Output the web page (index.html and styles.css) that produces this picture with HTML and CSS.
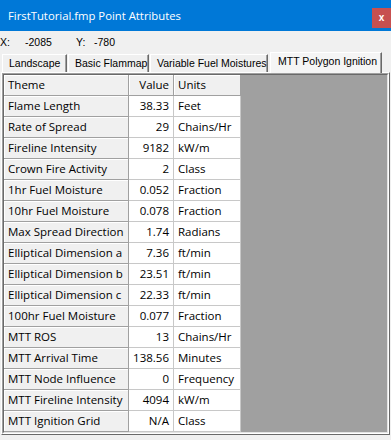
FILE: index.html
```html
<!DOCTYPE html>
<html>
<head>
<meta charset="utf-8">
<link rel="stylesheet" href="styles.css">
</head>
<body>
<div class="window">
  <div class="titlebar">
    <span class="title">FirstTutorial.fmp Point Attributes</span>
    <span class="close">x</span>
  </div>
  <div class="coords">
    <span class="c-x">X:</span><span class="c-xv">-2085</span><span class="c-y">Y:</span><span class="c-yv">-780</span>
  </div>
  <div class="tabs">
    <div class="tab t1">Landscape</div>
    <div class="tab t2">Basic Flammap</div>
    <div class="tab t3">Variable Fuel Moistures</div>
    <div class="tab t4 active">MTT Polygon Ignition</div>
  </div>
  <div class="page">
    <div class="grid">
      <div class="gridin">
        <div class="row head"><div class="th">Theme</div><div class="val fx">Value</div><div class="unit fx">Units</div></div>
        <div class="row"><div class="th">Flame Length</div><div class="val">38.33</div><div class="unit">Feet</div></div>
        <div class="row"><div class="th">Rate of Spread</div><div class="val">29</div><div class="unit">Chains/Hr</div></div>
        <div class="row"><div class="th">Fireline Intensity</div><div class="val">9182</div><div class="unit">kW/m</div></div>
        <div class="row"><div class="th">Crown Fire Activity</div><div class="val">2</div><div class="unit">Class</div></div>
        <div class="row"><div class="th">1hr Fuel Moisture</div><div class="val">0.052</div><div class="unit">Fraction</div></div>
        <div class="row"><div class="th">10hr Fuel Moisture</div><div class="val">0.078</div><div class="unit">Fraction</div></div>
        <div class="row"><div class="th">Max Spread Direction</div><div class="val">1.74</div><div class="unit">Radians</div></div>
        <div class="row"><div class="th">Elliptical Dimension a</div><div class="val">7.36</div><div class="unit">ft/min</div></div>
        <div class="row"><div class="th">Elliptical Dimension b</div><div class="val">23.51</div><div class="unit">ft/min</div></div>
        <div class="row"><div class="th">Elliptical Dimension c</div><div class="val">22.33</div><div class="unit">ft/min</div></div>
        <div class="row"><div class="th">100hr Fuel Moisture</div><div class="val">0.077</div><div class="unit">Fraction</div></div>
        <div class="row"><div class="th">MTT ROS</div><div class="val">13</div><div class="unit">Chains/Hr</div></div>
        <div class="row"><div class="th">MTT Arrival Time</div><div class="val">138.56</div><div class="unit">Minutes</div></div>
        <div class="row"><div class="th">MTT Node Influence</div><div class="val">0</div><div class="unit">Frequency</div></div>
        <div class="row"><div class="th">MTT Fireline Intensity</div><div class="val">4094</div><div class="unit">kW/m</div></div>
        <div class="row"><div class="th">MTT Ignition Grid</div><div class="val">N/A</div><div class="unit">Class</div></div>
      </div>
    </div>
  </div>
</div>
</body>
</html>
```

FILE: styles.css
```css
html, body {
  margin: 0;
  padding: 0;
  background: #f0f0f0;
}
.window {
  width: 391px;
  height: 440px;
  overflow: hidden;
  background: #f0f0f0;
  color: #000;
}
.titlebar {
  height: 31px;
  background: #0078d7;
  display: flex;
  align-items: center;
}
.title {
  padding-left: 8px;
  color: #fff;
  font-family: "Open Sans", sans-serif;
  font-size: 11.3px;
  margin-top: -1px;
}
.close {
  margin-left: auto;
  align-self: flex-end;
  margin-bottom: 3px;
  width: 19px;
  height: 20px;
  background: #c75050;
  color: #fff;
  font-family: "Liberation Sans", sans-serif;
  font-weight: bold;
  font-size: 10px;
  line-height: 19px;
  text-align: center;
}
.coords {
  height: 21px;
  display: flex;
  align-items: center;
  font-family: "Liberation Sans", sans-serif;
  font-size: 10.5px;
}
.c-x { width: 25px; }
.c-xv { width: 51px; }
.c-y { width: 18px; }
.tabs {
  height: 20px;
  display: flex;
  align-items: flex-end;
  font-family: "Liberation Sans", sans-serif;
  font-size: 10.5px;
}
.tab {
  box-sizing: border-box;
  height: 18px;
  padding-left: 6px;
  line-height: 16px;
  border-top: 1px solid #fff;
  border-left: 1px solid #fff;
  border-right: 1px solid #696969;
  box-shadow: inset -1px 0 0 #a0a0a0;
  background: #f0f0f0;
  white-space: nowrap;
  overflow: hidden;
}
.t1 { margin-left: 2px; width: 65px; }
.t2 { margin-left: 1px; width: 81px; }
.t3 { margin-left: 1px; width: 118px; }
.t4 { margin-left: 2px; width: 112px; }
.tab.active {
  height: 21px;
  margin-bottom: -1px;
  line-height: 17px;
  padding-left: 7px;
  background: #f5f5f5;
  position: relative;
  z-index: 1;
}
.page {
  margin-left: 1px;
  width: 389px;
  box-sizing: border-box;
  border-top: 1px solid #fff;
  border-left: 1px solid #fff;
  border-right: 1px solid #696969;
  border-bottom: 1px solid #696969;
}
.grid {
  border-top: 1px solid #a0a0a0;
  border-left: 1px solid #a0a0a0;
  border-right: 1px solid #fff;
  border-bottom: 1px solid #fff;
}
.gridin {
  border-top: 1px solid #696969;
  border-left: 1px solid #696969;
  border-right: 1px solid #e3e3e3;
  border-bottom: 1px solid #e3e3e3;
  background: #a0a0a0;
  font-family: "Open Sans", sans-serif;
  font-size: 11.5px;
}
.row {
  display: flex;
  height: 21px;
}
.row > div {
  box-sizing: border-box;
  height: 21px;
  line-height: 20px;
  white-space: nowrap;
  overflow: hidden;
}
.th, .fx {
  background: #f0f0f0;
  border-right: 1px solid #a0a0a0;
  border-bottom: 1px solid #a0a0a0;
  box-shadow: inset 1px 1px 0 #fff;
}
.th {
  width: 125px;
  padding-left: 4px;
}
.val {
  width: 45px;
  text-align: right;
  padding-right: 4px;
  background: #fff;
  border-right: 1px solid #c8c8c8;
  border-bottom: 1px solid #c8c8c8;
}
.unit {
  width: 67px;
  padding-left: 4px;
  background: #fff;
  border-right: 1px solid #c8c8c8;
  border-bottom: 1px solid #c8c8c8;
}
.head .val, .head .unit {
  background: #f0f0f0;
  border-right: 1px solid #a0a0a0;
  border-bottom: 1px solid #a0a0a0;
}
```
